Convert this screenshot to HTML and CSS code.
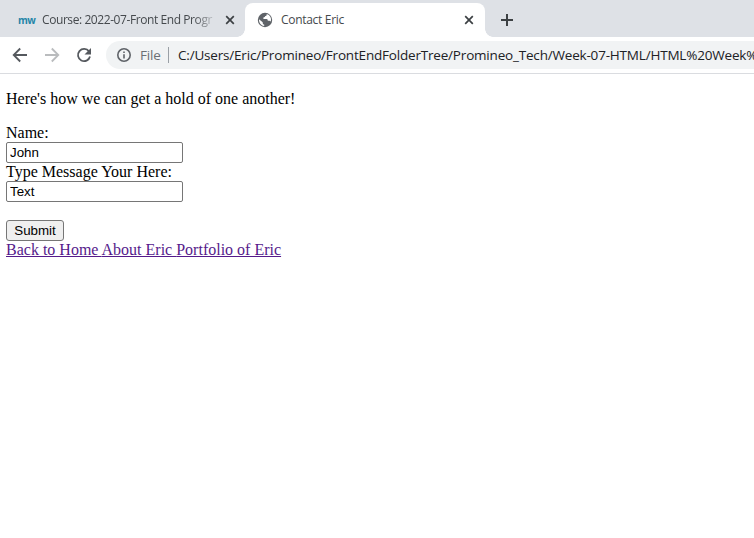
FILE: index.html
```html
<!DOCTYPE html>
<html lang="en">
<head>
<meta charset="utf-8">
<title>Contact Eric</title>
<link rel="stylesheet" href="styles.css">
</head>
<body>
<header class="tabstrip">
  <div class="tab">
    <span class="mw">mw</span>
    <span class="tab-title fade"><span class="t1">Course: 2022-07-Front End Progr</span></span>
    <svg class="close" viewBox="0 0 10 10"><path d="M1.2 1.2l7.6 7.6M8.8 1.2L1.2 8.8"/></svg>
  </div>
  <div class="tab active">
    <svg class="globe" viewBox="0 0 16 16"><circle cx="8" cy="8" r="7.2" fill="#5f6368"/><path d="M9.700 1.900c.2 1.300-.3 2-1.500 2.100-.2 1-.7 1.400-1.800 1.400v1.500h3.200c.9.100 1.200.8 1.200 1.800h1.400c.8 0 1.300.4 1.600 1A6 6 0 0 0 9.700 1.900zM2 7.300c-.3 3.300 1.900 6.200 5.200 6.700v-1.400c-.9-.1-1.500-.7-1.500-1.600v-.7z" fill="#fff"/></svg>
    <span class="tab-title"><span class="t2">Contact Eric</span></span>
    <svg class="close" viewBox="0 0 10 10"><path d="M1.2 1.2l7.6 7.6M8.8 1.2L1.2 8.8"/></svg>
  </div>
  <svg class="plus" viewBox="0 0 12 12"><path d="M6 0v12M0 6h12"/></svg>
</header>
<nav class="toolbar">
  <svg class="nav-icon" viewBox="0 0 16 16"><path d="M15 8H2M8.200 1.500L1.700 8l6.500 6.500"/></svg>
  <svg class="nav-icon off" viewBox="0 0 16 16"><path d="M1 8h13M7.800 1.500L14.300 8l-6.500 6.500"/></svg>
  <svg class="nav-icon" viewBox="0 0 16 16"><path d="M13 4.400A6.100 6.100 0 1 0 14 9.500"/><path class="solid" d="M15 1v6.500H8.500z"/></svg>
  <div class="omnibox">
    <svg class="info" viewBox="0 0 14 14"><circle cx="7" cy="7" r="6.200"/><path d="M7 6.200v4.300M7 3.400v1.600"/></svg>
    <span class="scheme">File</span>
    <span class="divider"></span>
    <span class="url">C:/Users/Eric/Promineo/FrontEndFolderTree/Promineo_Tech/Week-07-HTML/HTML%20Week%</span>
  </div>
</nav>
<main class="page">
  <p class="intro">Here's how we can get a hold of one another!</p>
  <form class="form">
    <label for="name">Name:</label>
    <input id="name" type="text" value="John">
    <label for="msg">Type Message Your Here:</label>
    <input id="msg" type="text" value="Text">
    <button type="button">Submit</button>
  </form>
  <div class="links"><a href="#">Back to Home </a><a href="#">About Eric </a><a href="#">Portfolio of Eric</a></div>
</main>
</body>
</html>
```
FILE: styles.css
```css
* { box-sizing: border-box; }
body {
  margin: 0;
  height: 538px;
  overflow: hidden;
  background: #fff;
  color: #000;
  font-family: "Liberation Serif", serif;
  font-size: 16px;
}
svg { flex: none; fill: none; }
.tabstrip {
  display: flex;
  align-items: flex-end;
  height: 37px;
  background: #dee1e6;
  font: 12px/16px "Open Sans", sans-serif;
  color: #45494d;
}
.tab {
  position: relative;
  display: flex;
  align-items: center;
  width: 245px;
  height: 34px;
  padding: 0 10px 0 18px;
}
.tab.active {
  width: 240px;
  padding: 0 11px 0 12px;
  background: #fff;
  border-radius: 8px 8px 0 0;
}
.tab.active::before,
.tab.active::after {
  content: "";
  position: absolute;
  bottom: 0;
  width: 8px;
  height: 8px;
}
.tab.active::before { left: -8px; background: radial-gradient(circle at 0 0, transparent 7.5px, #fff 8px); }
.tab.active::after { right: -8px; background: radial-gradient(circle at 100% 0, transparent 7.5px, #fff 8px); }
.mw {
  flex: none;
  width: 24px;
  font: bold 10px/12px "Open Sans", sans-serif;
  letter-spacing: -0.5px;
  color: #2585a8;
}
.tab-title { flex: 1; overflow: hidden; white-space: nowrap; }
.fade {
  flex: none;
  width: 174px;
  margin-right: 9px;
  -webkit-mask-image: linear-gradient(to right, #000 152px, transparent 176px);
  mask-image: linear-gradient(to right, #000 152px, transparent 176px);
}
.t1 { letter-spacing: -0.42px; }
.t2 { letter-spacing: -0.3px; }
.close { width: 10px; height: 10px; stroke: #3c4043; stroke-width: 1.7; }
.globe { width: 16px; height: 16px; margin-right: 8px; }
.plus { width: 12px; height: 12px; margin: 0 0 11px 16px; stroke: #3c4043; stroke-width: 2; }
.toolbar {
  display: flex;
  align-items: center;
  height: 37px;
  padding: 0 0 1px 12px;
  border-bottom: 1px solid #dadce0;
}
.nav-icon { width: 16px; height: 16px; margin-right: 16px; stroke: #55595e; stroke-width: 1.8; }
.nav-icon.off { stroke: #babcbe; }
.nav-icon .solid { fill: #55595e; stroke: none; }
.nav-icon + .omnibox { margin-left: -2px; }
.omnibox {
  display: flex;
  align-items: center;
  flex: 1;
  min-width: 0;
  height: 28px;
  padding-left: 11px;
  overflow: hidden;
  background: #f1f3f4;
  border-radius: 14px 0 0 14px;
  font: 13.5px/20px "Open Sans", sans-serif;
  white-space: nowrap;
}
.info { width: 14px; height: 14px; margin-right: 9px; stroke: #5f6368; stroke-width: 1.6; }
.scheme { flex: none; width: 28px; color: #6b6f74; letter-spacing: -0.15px; }
.divider { flex: none; width: 1px; height: 16px; margin-right: 9px; background: #9aa0a6; }
.url { flex: none; color: #202124; letter-spacing: -0.19px; }
.page { padding: 16px 6px 0; }
.intro { margin: 0 0 16px; line-height: 18px; }
.form { display: flex; flex-direction: column; align-items: flex-start; }
.form label { line-height: 18px; }
.form input {
  width: 177px;
  height: 21px;
  padding: 1px 3px;
  border: 1px solid #767676;
  border-radius: 2px;
  background: #fff;
  color: #000;
  font: 13.33px "Liberation Sans", sans-serif;
}
.form button {
  width: 58px;
  height: 21px;
  margin-top: 18px;
  padding: 0;
  border: 1px solid #767676;
  border-radius: 3px;
  background: #efefef;
  color: #000;
  font: 13.33px "Liberation Sans", sans-serif;
}
.links { line-height: 18px; white-space: nowrap; }
.links a { color: #551a8b; }
```
